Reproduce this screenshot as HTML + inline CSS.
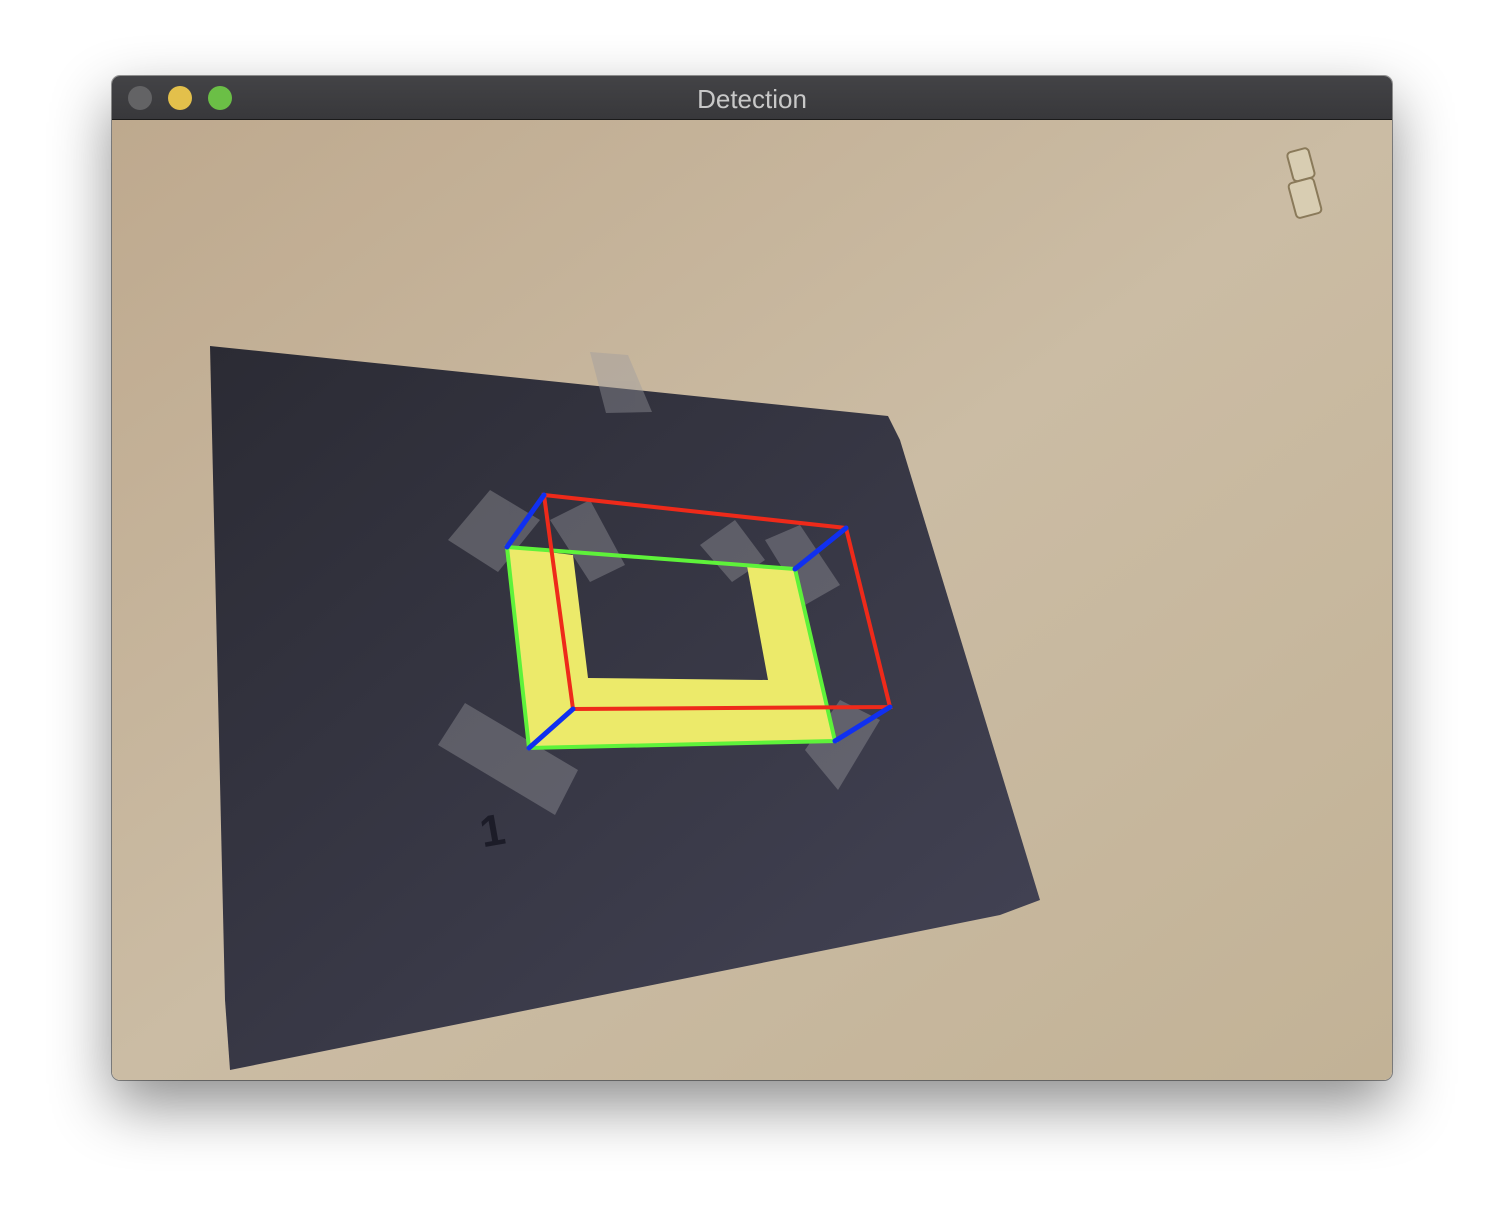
<!DOCTYPE html>
<html><head><style>
html,body{margin:0;padding:0;background:#fff;width:1504px;height:1228px;overflow:hidden;font-family:"Liberation Sans",sans-serif}
.win{position:absolute;left:112px;top:76px;width:1280px;height:1004px;border-radius:8px;overflow:hidden;box-shadow:0 25px 60px rgba(0,0,0,0.45),0 0 0 1px rgba(0,0,0,0.4)}
.bar{position:absolute;left:0;top:0;width:1280px;height:43px;background:linear-gradient(#434346,#38383b);border-bottom:1px solid #1a1a1a}
.dot{position:absolute;top:10px;width:24px;height:24px;border-radius:50%}
.title{position:absolute;left:0;right:0;top:8px;text-align:center;color:#c8c8c8;font-size:26px}
svg{position:absolute;left:0;top:44px}
</style></head><body>
<div class="win">
<div class="bar">
<div class="dot" style="left:16px;background:#636365"></div>
<div class="dot" style="left:56px;background:#e3c04b"></div>
<div class="dot" style="left:96px;background:#6bbf46"></div>
<div class="title">Detection</div>
</div>
<svg width="1280" height="960" viewBox="112 120 1280 960">
<defs>
<linearGradient id="bg" x1="0" y1="0" x2="1" y2="1">
<stop offset="0" stop-color="#bea98e"/><stop offset="0.5" stop-color="#cbbca4"/><stop offset="1" stop-color="#c2b296"/>
</linearGradient>
<linearGradient id="pp" x1="0" y1="0" x2="1" y2="1">
<stop offset="0" stop-color="#2b2b34"/><stop offset="1" stop-color="#444456"/>
</linearGradient>
</defs>
<rect x="112" y="120" width="1280" height="960" fill="url(#bg)"/>
<polygon points="210,346 888,416 900,440 1040,900 1000,915 230,1070 225,1000" fill="url(#pp)"/>
<g fill="#9a9aa0" opacity="0.4">
<polygon points="590,352 628,355 652,412 606,413"/>
<polygon points="448,540 490,490 540,520 498,572"/>
<polygon points="550,520 590,500 625,565 590,582"/>
<polygon points="700,545 735,520 765,560 732,582"/>
<polygon points="765,540 800,525 840,585 805,605"/>
<polygon points="438,745 465,703 578,770 555,815"/>
<polygon points="805,750 840,700 880,720 838,790"/>
</g>
<polygon points="507,547 573,555 588,678 768,680 747,566 795,569 835,741 529,748" fill="#ecea6a"/>
<g fill="none" stroke-width="4" stroke-linecap="round">
<polygon points="507,547 795,569 835,741 529,748" stroke="#5ef23a"/>
<polygon points="544,495 846,528 890,707 573,709" stroke="#ee2a1a"/>
<g stroke="#1030f0" stroke-width="5">
<line x1="507" y1="547" x2="544" y2="495"/><line x1="795" y1="569" x2="846" y2="528"/>
<line x1="835" y1="741" x2="890" y2="707"/><line x1="529" y1="748" x2="573" y2="709"/>
</g>
</g>
<text x="480" y="845" font-size="44" fill="#1c1c28" font-weight="bold" transform="rotate(-10 495 830)">1</text>
<g fill="#d8cdb2" stroke="#8a7a5a" stroke-width="2">
<rect x="1290" y="150" width="22" height="30" rx="4" transform="rotate(-15 1300 165)"/>
<rect x="1292" y="180" width="26" height="36" rx="4" transform="rotate(-15 1305 198)"/>
</g>
</svg>
</div>
</body></html>
